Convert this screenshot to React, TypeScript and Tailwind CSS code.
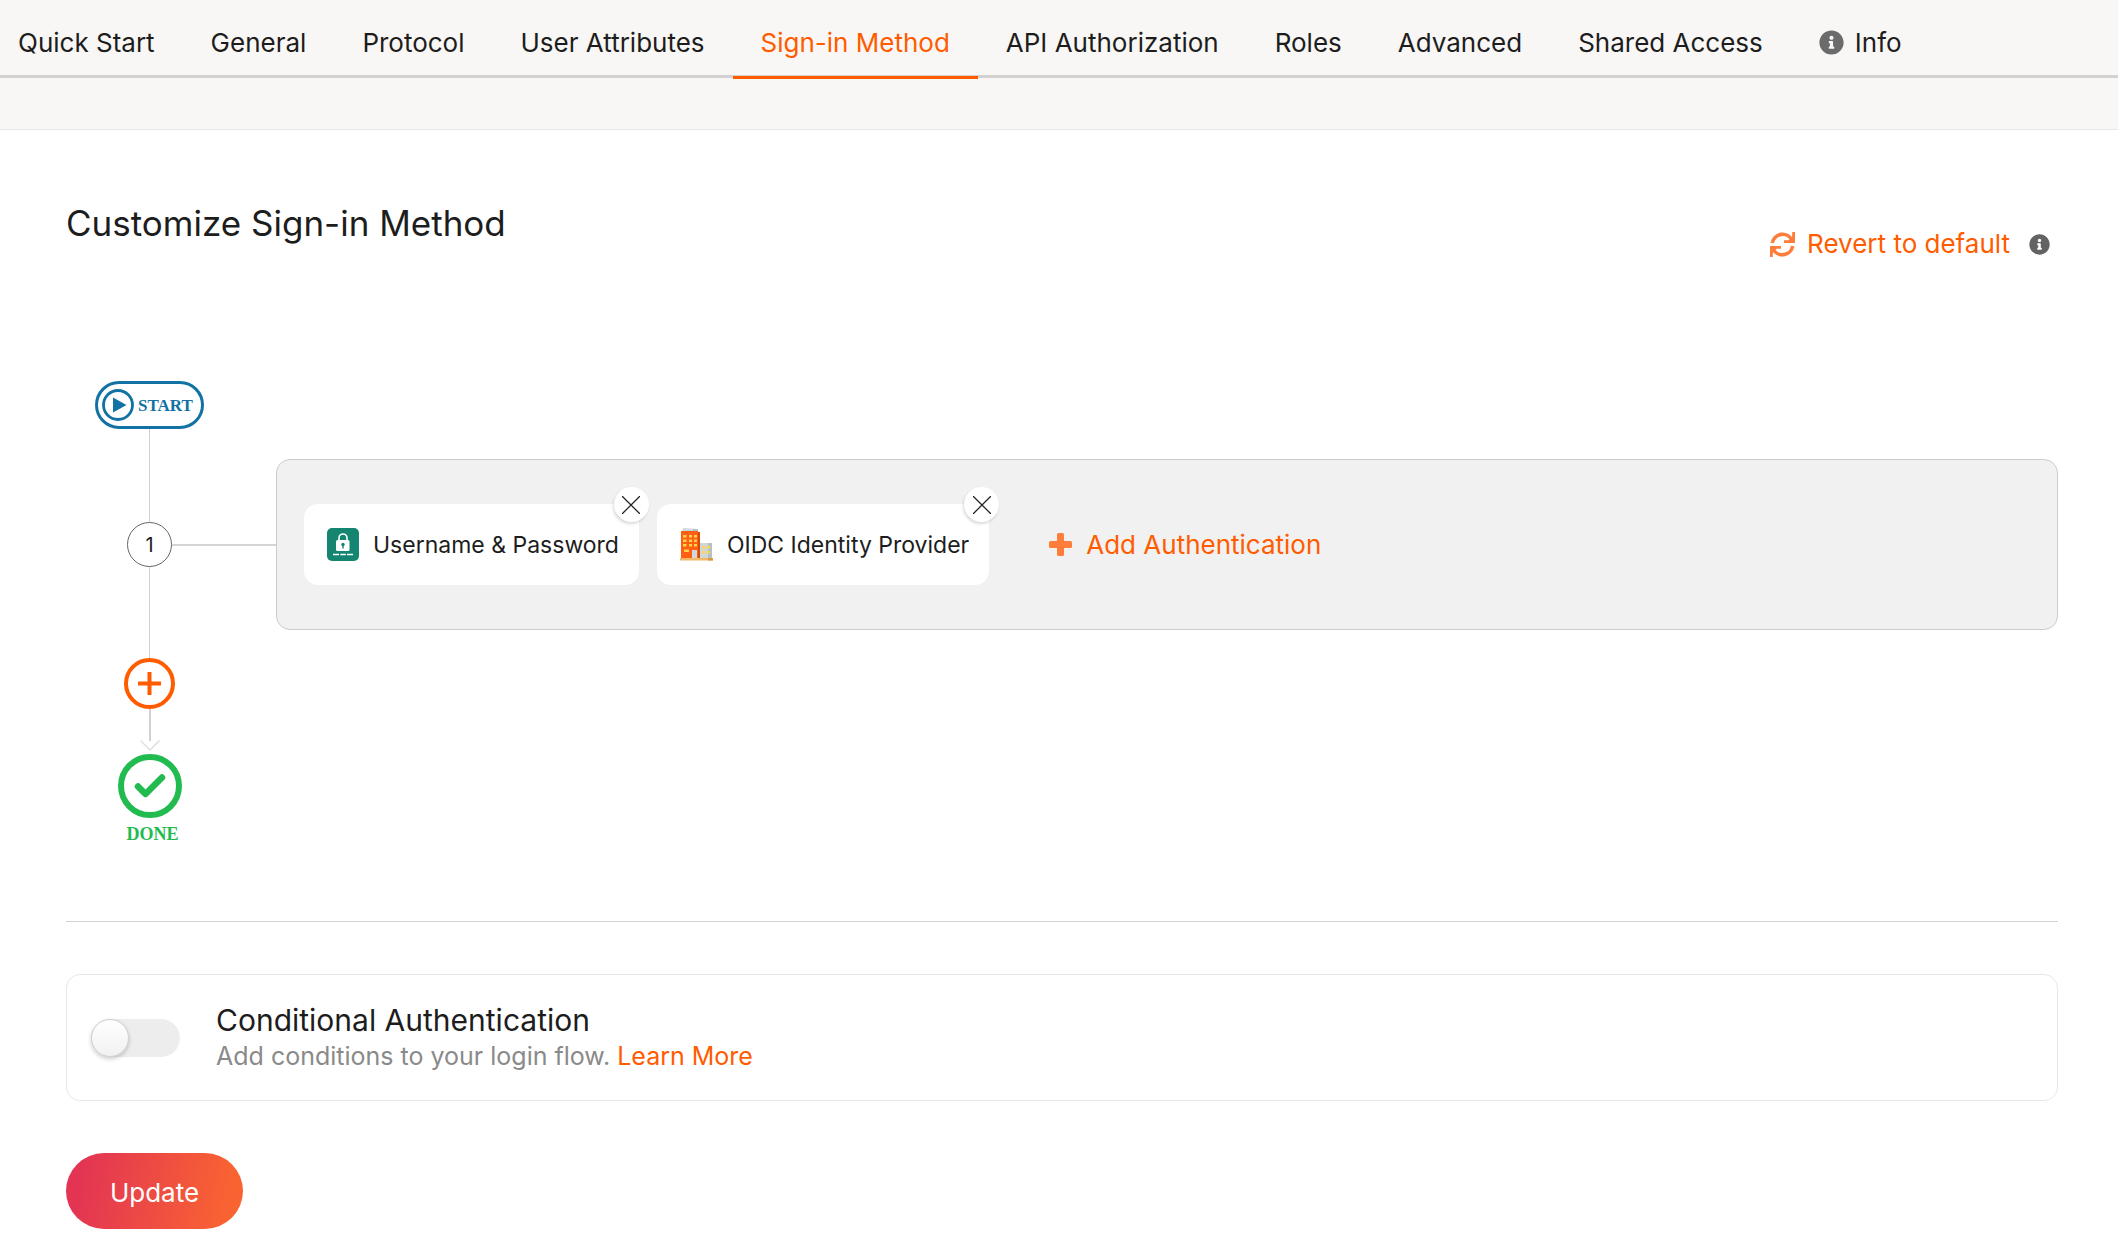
import { useState } from "react";
import type { ReactNode } from "react";
import { FaInfoCircle } from "react-icons/fa";

const tabs = [
  "Quick Start",
  "General",
  "Protocol",
  "User Attributes",
  "Sign-in Method",
  "API Authorization",
  "Roles",
  "Advanced",
  "Shared Access",
  "Info",
];

function RefreshIcon() {
  return (
    <svg viewBox="0 0 25 25" className="size-[25px]" fill="none" stroke="#ff7d3b" aria-hidden="true">
      <path d="M2.300 11A10.400 10.400 0 0 1 22 8.300M22.700 14A10.400 10.400 0 0 1 3 16.700" strokeWidth="3.600" />
      <path d="M23.600 0v9.700H14M1.400 25v-9.700H11" strokeWidth="2.800" />
      <path d="M18 9.500l5-5v5zM7 15.500l-5 5v-5z" fill="#ff7d3b" />
    </svg>
  );
}

function PlusIcon() {
  return (
    <svg viewBox="0 0 23 23" className="size-[23px]" fill="#ff7d3b" aria-hidden="true">
      <rect x="8" width="7" height="23" rx="1.500" />
      <rect y="8" width="23" height="7" rx="1.500" />
    </svg>
  );
}

function LockIcon() {
  return (
    <svg viewBox="0 0 32 33" className="h-[33px] w-8" aria-hidden="true">
      <rect width="32" height="33" rx="5" fill="#138571" />
      <path d="M12 13V10a4 4 0 0 1 8 0v3" fill="none" stroke="#fff" strokeWidth="1.600" />
      <rect x="9" y="12" width="13.500" height="11" rx="1.500" fill="#fff" />
      <circle cx="16" cy="16.500" r="1.700" fill="#138571" />
      <path d="M16 17v3.500" stroke="#138571" strokeWidth="1.400" />
      <path d="M6 26.500h6M13.300 26.500h5.600M20 26.500h6" stroke="#fff" strokeWidth="1.400" />
    </svg>
  );
}

function BuildingIcon() {
  return (
    <svg viewBox="0 0 33 33" className="size-[33px]" aria-hidden="true">
      <path d="M3 0l15 1v3H2z" fill="#cfd8dc" />
      <path d="M13 1l5 .5V4h-5z" fill="#b0bec5" />
      <path d="M1 3h17v27H1z" fill="#ff5e13" />
      <path d="M18 4h2v26h-2z" fill="#d8480b" />
      <path d="M20 15h12v15H20z" fill="#cfd8d7" />
      <path d="M28 15h4v15h-4z" fill="#b4c2c4" />
      <path d="M12 22h5v8h-5z" fill="#cfd8dc" />
      <path
        d="M3 7h3.500v2.500H3zM9 7h3v2.500H9zM14 7h3v2.500h-3zM3 11.500h3.500V14H3zM9 11.500h3V14H9zM14 11.500h3V14h-3zM3 16h3.500v2.500H3zM9 16h3v2.500H9zM14 16h3v2.500h-3zM4 21.500h5V24H4zM22 18h3v2.500h-3zM27 18h3v2.500h-3zM22 23h3v2.500h-3zM27 23h3v2.500h-3z"
        fill="#ffd54f"
      />
      <path d="M0 30h33v2.500H0z" fill="#f0b868" />
      <path d="M28 30h5v2.500h-5z" fill="#e0993c" />
    </svg>
  );
}

function MethodCard({ icon, label }: { icon: ReactNode; label: string }) {
  return (
    <div className="relative flex h-[81px] items-center gap-[14px] rounded-[14px] bg-white pr-5 pl-[23px]">
      {icon}
      <span className="text-[23px] leading-8">{label}</span>
      <button
        type="button"
        aria-label={`Remove ${label}`}
        className="absolute -top-[17px] -right-[10px] flex size-[35px] items-center justify-center rounded-full bg-white shadow-[-1px_2px_3px_rgba(0,0,0,0.15)]"
      >
        <svg viewBox="0 0 18 18" className="size-[18px]" aria-hidden="true">
          <path d="M0 0l18 18M18 0L0 18" stroke="#222" strokeWidth="1.300" />
        </svg>
      </button>
    </div>
  );
}

export default function App() {
  const [active, setActive] = useState("Sign-in Method");
  const [conditional, setConditional] = useState(false);

  return (
    <div className="min-h-screen bg-white font-['Inter',sans-serif] text-[#1d1d1d]">
      <header className="border-b border-[#e5e7e9] bg-[#f8f7f5] pb-[51px]">
        <nav className="flex h-[78px] border-b-[3px] border-[#d3d1d1]">
          {tabs.map((tab) => (
            <button
              key={tab}
              type="button"
              onClick={() => setActive(tab)}
              className={
                tab === active
                  ? "-mb-1 flex items-center gap-[11px] border-b-[3px] border-[#ff5c00] px-7 pt-2 text-[26px] whitespace-nowrap text-[#ff5c00] first:pl-[18px]"
                  : "-mb-1 flex items-center gap-[11px] border-b-[3px] border-transparent px-7 pt-2 text-[26px] whitespace-nowrap first:pl-[18px]"
              }
            >
              {tab === "Info" && <FaInfoCircle className="size-[25px] text-[#6b6b6b]" />}
              {tab}
            </button>
          ))}
        </nav>
      </header>

      <main className="pr-[60px] pb-6 pl-[66px]">
        <div className="flex items-start justify-between pt-[70px]">
          <h1 className="text-[35px] leading-[46px]">Customize Sign-in Method</h1>
          <div className="flex items-center gap-[19px] pt-7 pr-2">
            <button type="button" className="flex items-center gap-3 text-[26px] leading-8 text-[#ff5c00]">
              <RefreshIcon />
              Revert to default
            </button>
            <FaInfoCircle className="size-[21px] text-[#636363]" />
          </div>
        </div>

        <section aria-label="Sign-in flow" className="pt-[121px]">
          <div className="flex w-[167px] flex-col items-center">
            <div className="flex h-12 w-[109px] items-center gap-1 rounded-full border-[3px] border-[#1272a3] pl-1 font-['Liberation_Serif',serif] text-[17px] font-bold text-[#1272a3]">
              <svg viewBox="0 0 32 32" className="size-8 shrink-0" aria-hidden="true">
                <circle cx="16" cy="16" r="14.500" fill="none" stroke="currentColor" strokeWidth="2.800" />
                <path d="M11 8.500v15L24.500 16z" fill="currentColor" />
              </svg>
              <span className="pt-0.5">START</span>
            </div>
            <div className="h-[30px] w-px bg-[#cfcfcf]" />
          </div>

          <div className="flex items-stretch">
            <div className="flex w-[167px] flex-col">
              <div className="w-px flex-1 self-center bg-[#cfcfcf]" />
              <div className="flex items-center">
                <div className="flex-1" />
                <div className="flex size-[45px] items-center justify-center rounded-full border border-[#666] text-xl">
                  1
                </div>
                <div className="h-0.5 flex-1 bg-[#d3d5d5]" />
              </div>
              <div className="w-px flex-1 self-center bg-[#cfcfcf]" />
            </div>
            <div className="h-0.5 w-[43px] self-center bg-[#d3d5d5]" />
            <div className="flex flex-1 items-center gap-[18px] rounded-[14px] border border-[#ccc] bg-[#f1f1f1] px-[27px] py-11">
              <MethodCard icon={<LockIcon />} label="Username & Password" />
              <MethodCard icon={<BuildingIcon />} label="OIDC Identity Provider" />
              <button type="button" className="ml-[42px] flex items-center gap-[14px] text-[26px] leading-8 text-[#ff5c00]">
                <PlusIcon />
                Add Authentication
              </button>
            </div>
          </div>

          <div className="flex w-[167px] flex-col items-center">
            <div className="h-7 w-px bg-[#cfcfcf]" />
            <button
              type="button"
              aria-label="Add step"
              className="flex size-[51px] items-center justify-center rounded-full border-4 border-[#ff5c00]"
            >
              <svg viewBox="0 0 23 23" className="size-[23px]" aria-hidden="true">
                <path d="M11.500 0v23M0 11.500h23" stroke="#ff5c00" strokeWidth="4" />
              </svg>
            </button>
            <svg viewBox="0 0 20 43" className="h-[43px] w-5" fill="none" aria-hidden="true">
              <path d="M10 0v32" stroke="#d0d2d4" strokeWidth="2" />
              <path d="M.5 31.500l9.500 9.500 9.500-9.500" stroke="#dcdcdc" strokeWidth="1.300" />
            </svg>
            <svg viewBox="0 0 64 64" className="mt-0.5 size-16" fill="none" stroke="#22bb4f" aria-hidden="true">
              <circle cx="32" cy="32" r="29" strokeWidth="6" />
              <path d="M20 32.500l7.500 7.500L44 23.500" strokeWidth="6.500" strokeLinecap="round" strokeLinejoin="round" />
            </svg>
            <div className="pt-1.5 pl-1.5 font-['Liberation_Serif',serif] text-lg leading-5 font-bold text-[#22bb4f]">
              DONE
            </div>
          </div>
        </section>

        <hr className="mt-[77px] border-[#d3d3d3]" />

        <section className="mt-[52px] flex h-[127px] items-center gap-9 rounded-[14px] border border-[#e8e8e8] pl-6">
          <input
            id="conditional"
            type="checkbox"
            role="switch"
            checked={conditional}
            onChange={(e) => setConditional(e.target.checked)}
            className="h-[38px] w-[89px] appearance-none rounded-full bg-[#ededed] before:block before:size-[38px] before:rounded-full before:border before:border-[#d0d0d0] before:bg-linear-to-b before:from-white before:to-[#f1f1f1] before:shadow-[0_2px_4px_rgba(0,0,0,0.2)] checked:bg-[#ff5c00] checked:before:ml-[51px]"
          />
          <div>
            <label htmlFor="conditional" className="block text-[30px] leading-9">
              Conditional Authentication
            </label>
            <p className="text-[25px] leading-9 text-[#8a8a8a]">
              Add conditions to your login flow.{" "}
              <a href="#learn-more" className="text-[#ff5c00]">
                Learn More
              </a>
            </p>
          </div>
        </section>

        <button
          type="button"
          className="mt-[52px] h-[76px] w-[177px] rounded-full bg-linear-[100deg] from-[#e33553] from-10% to-[#f96332] to-90% pt-0.5 text-[26px] text-white"
        >
          Update
        </button>
      </main>
    </div>
  );
}
